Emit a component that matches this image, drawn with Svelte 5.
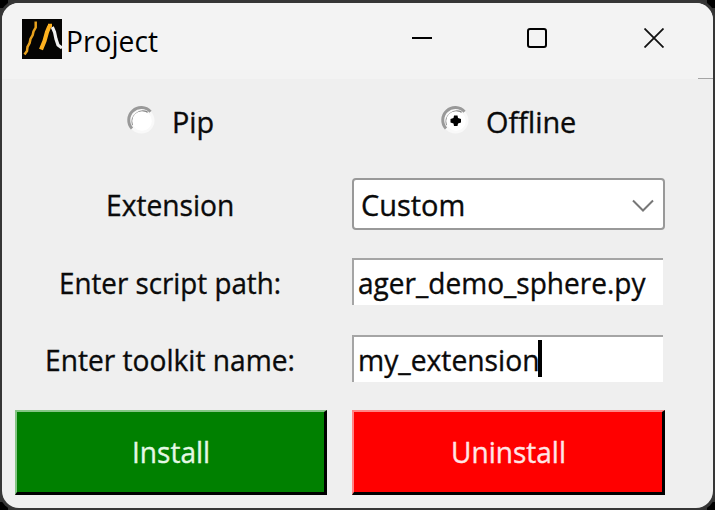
<script>
  // Scales a label horizontally so its text spans the given width.
  function fit(node, width) {
    const inner = node.firstElementChild;
    node.style.width = `${width}px`;
    const apply = () => {
      inner.style.transform = `scaleX(${width / inner.offsetWidth})`;
    };
    apply();
    document.fonts?.ready.then(apply);
  }
  const modes = [
    { name: 'Pip', width: 42, checked: false },
    { name: 'Offline', width: 90, checked: true }
  ];
</script>

{#snippet label(text, width)}
  <span class="label" use:fit={width}><span>{text}</span></span>
{/snippet}

<div class="screen">
  <div class="window">
    <header>
      <svg class="logo" width="40" height="40" viewBox="0 0 40 40">
        <rect width="40" height="40" fill="#050403" />
        <path d="M13.7 2.5V8.5L11.5 12.5L10.7 16L8.5 20L7.6 24L5.5 28L5 32L2.5 35.5" fill="none" stroke="#e8a11d" stroke-width="2.5" />
        <path d="M19 30.5L22.5 22L25 13L27.5 7" fill="none" stroke="#ffb21f" stroke-width="4.2" stroke-linejoin="round" />
        <path d="M26 6.5H30" stroke="#ffb21f" stroke-width="3.5" />
        <path d="M30.3 8L32.5 13L34 20L36 26L40 29" fill="none" stroke="#f0f0f0" stroke-width="3.2" />
      </svg>
      <h1>{@render label('Project', 92)}</h1>
      <div class="controls">
        <svg width="20" height="20" viewBox="0 0 20 20"><path d="M0 10H20" stroke="#000" stroke-width="2" /></svg>
        <svg width="20" height="20" viewBox="0 0 20 20"><rect x="1" y="1" width="18" height="18" rx="2" fill="none" stroke="#000" stroke-width="2" /></svg>
        <svg width="20" height="20" viewBox="0 0 20 20"><path d="M.5 .5L19.5 19.5M19.5 .5L.5 19.5" stroke="#111" stroke-width="1.8" /></svg>
      </div>
      <i class="notch"></i>
    </header>
    <main>
      <div class="row modes">
        {#each modes as mode}
          <div class="mode">
            <svg width="30" height="30" viewBox="0 0 30 30">
              <circle cx="15.5" cy="15.5" r="13" fill="#f9f9f9" />
              <path d="M6 23.5A12.2 12.2 0 0 1 24.5 6.7" fill="none" stroke="#999" stroke-width="3" />
              <path d="M7 20A10.5 10.5 0 0 1 21.5 7.5" fill="none" stroke="#888" stroke-width="2" />
              <circle cx="16" cy="16" r="9.8" fill="#fff" />
              {#if mode.checked}<path d="M14 10.5H17.5L18 13L21 14V17.5L18 18.5L17.5 21H14L13.5 18.5L10.5 17.5V14L13.5 13Z" fill="#000" />{/if}
            </svg>
            {@render label(mode.name, mode.width)}
          </div>
        {/each}
      </div>
      <div class="row extension">
        <div class="caption">{@render label('Extension', 128)}</div>
        <div class="select">
          {@render label('Custom', 104)}
          <svg width="22" height="14" viewBox="0 0 22 14"><path d="M1 1.5L11 11.5L21 1.5" fill="none" stroke="#777" stroke-width="2" /></svg>
        </div>
      </div>
      <div class="row field">
        <div class="caption">{@render label('Enter script path:', 222)}</div>
        <div class="input">{@render label('ager_demo_sphere.py', 288)}</div>
      </div>
      <div class="row field">
        <div class="caption">{@render label('Enter toolkit name:', 250)}</div>
        <div class="input">{@render label('my_extension', 182)}<i class="caret"></i></div>
      </div>
      <div class="row buttons">
        <button class="install">{@render label('Install', 78)}</button>
        <button class="uninstall">{@render label('Uninstall', 115)}</button>
      </div>
    </main>
  </div>
</div>

<style>
  .screen {
    box-sizing: border-box;
    width: 715px;
    height: 510px;
    background: linear-gradient(#000, #000) 0 0 / 8px 8px no-repeat,
      linear-gradient(#000, #000) 100% 0 / 8px 8px no-repeat,
      linear-gradient(#000, #000) 0 100% / 8px 8px no-repeat,
      linear-gradient(#000, #000) 100% 100% / 8px 8px no-repeat, #333;
    padding: 3px 2px 2px;
    overflow: hidden;
    color: #0a0a0a;
    font: 29.5px/40px 'Open Sans', 'Noto Sans', sans-serif;
  }
  .window {
    height: 505px;
    border-radius: 17px;
    background: #efefef;
    box-shadow: 0 0 0 3px #363636;
    overflow: hidden;
  }
  header {
    position: relative;
    box-sizing: border-box;
    display: flex;
    height: 76px;
    padding: 16px 49px 0 20px;
    background: #f3f3f3;
  }
  svg { display: block; flex: none; }
  h1 {
    margin: 2px 0 0 4px;
    font-size: 28.5px;
    font-weight: 400;
    color: #000;
  }
  .controls {
    display: flex;
    gap: 96px;
    margin: 9px 0 0 auto;
    height: 20px;
  }
  .controls svg:nth-child(2) { margin-right: 1px; margin-left: -1px; }
  .notch {
    position: absolute;
    right: 0;
    bottom: 0;
    width: 15px;
    height: 1px;
    background: #a5a5a5;
  }
  .label {
    display: inline-block;
    flex: none;
    white-space: nowrap;
    text-align: left;
  }
  .label > span {
    display: inline-block;
    transform-origin: 0 50%;
  }
  main {
    display: flex;
    flex-direction: column;
    padding-left: 13px;
    -webkit-text-stroke: 0.35px currentColor;
  }
  .row {
    display: grid;
    grid-template-columns: 312px 313px;
    column-gap: 25px;
  }
  .modes { height: 99px; padding-top: 26px; box-sizing: border-box; }
  .mode {
    display: flex;
    justify-content: center;
    gap: 16px;
    height: 36px;
    padding-right: 2px;
    line-height: 34px;
  }
  .caption { padding-right: 3px; text-align: center; }
  .extension { height: 80px; }
  .extension .caption { padding-top: 7px; }
  .select {
    box-sizing: border-box;
    display: flex;
    justify-content: space-between;
    height: 52px;
    padding: 5px 9px 0 7px;
    border: 2px solid #999;
    border-radius: 4px;
    background: #fff;
  }
  .select svg { margin-top: 14px; }
  .field { height: 77px; }
  .field .caption { padding-top: 5px; }
  .input {
    box-sizing: border-box;
    display: flex;
    width: 311px;
    height: 47px;
    padding: 3px 0 0 4px;
    border: 0 solid #a5a5a5;
    border-width: 2px 0 0 2px;
    background: #fff;
  }
  .caret {
    width: 4px;
    height: 37px;
    margin-left: -2px;
    background: #000;
  }
  .buttons { height: 85px; margin-top: -2px; }
  button {
    box-sizing: border-box;
    height: 85px;
    padding: 0 0 1px;
    border: 3px solid #000;
    border-width: 2px 3px 3px 2px;
    font: inherit;
    color: #e4f8e4;
    -webkit-text-stroke: inherit;
  }
  .install { background: #008000; border-color: #84c584 #000 #000 #84c584; }
  .uninstall { background: #f00; border-color: #ff8585 #000 #000 #ff8585; color: #ffe6e6; }
</style>
